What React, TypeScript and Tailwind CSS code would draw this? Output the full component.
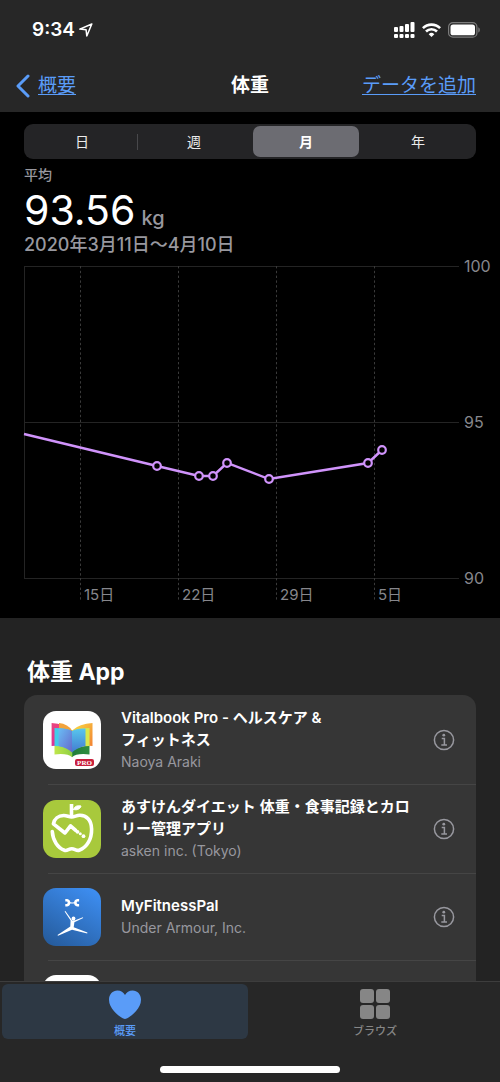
import { useState, type ReactNode } from "react";

const ranges = ["日", "週", "月", "年"];

const points = [
  [133, 206],
  [175, 216],
  [189, 216],
  [203, 203],
  [245, 219],
  [344, 203],
  [358, 190],
];

const days = [
  { x: 56, label: "15日" },
  { x: 154, label: "22日" },
  { x: 252, label: "29日" },
  { x: 350, label: "5日" },
];

const levels = [
  { y: 6, label: "100" },
  { y: 162, label: "95" },
  { y: 318, label: "90" },
];

function StatusBar() {
  return (
    <div className="flex h-15 items-center justify-between pr-5 pl-8">
      <div className="flex items-center gap-1">
        <span className="text-[19px] font-semibold">9:34</span>
        <svg width="14" height="14" viewBox="0 0 14 14" fill="none" stroke="white" strokeWidth="1.5" strokeLinejoin="round" aria-hidden="true">
          <path d="M12.8 1 .8 6.100l6.300.7.7 6.200z" />
        </svg>
      </div>
      <div className="flex items-center gap-[7px]">
        <svg width="21" height="16" viewBox="0 0 21 16" fill="white" aria-hidden="true">
          <rect x="0" y="5" width="4" height="5" rx="1" />
          <rect x="5.5" y="4" width="4" height="6" rx="1" />
          <rect x="11" y="2" width="4" height="8" rx="1" />
          <rect x="16.5" y="0" width="4" height="10" rx="1" />
          <rect x="0" y="12" width="4" height="4" rx="1" />
          <rect x="5.5" y="12" width="4" height="4" rx="1" />
          <rect x="11" y="12" width="4" height="4" rx="1" />
          <rect x="16.5" y="12" width="4" height="4" rx="1" />
        </svg>
        <svg width="19" height="14" viewBox="0 0 19 14" fill="none" stroke="white" strokeWidth="2.6" aria-hidden="true">
          <path d="M.9 5.1a12.3 12.3 0 0 1 17.2 0" />
          <path d="M4 8.5a7.8 7.8 0 0 1 11 0" />
          <path d="M9.5 14 6.7 11.2a4 4 0 0 1 5.6 0z" fill="white" stroke="none" />
        </svg>
        <svg width="32" height="16" viewBox="0 0 32 16" aria-hidden="true">
          <rect x=".6" y=".6" width="28.3" height="14.6" rx="4.3" fill="none" stroke="#7c7c7c" strokeWidth="1.2" />
          <rect x="2.5" y="2.5" width="24.5" height="10.8" rx="2.6" fill="white" />
          <path d="M30.3 5.3c2 .8 2 4.4 0 5.2z" fill="#7c7c7c" />
        </svg>
      </div>
    </div>
  );
}

function WeightChart() {
  return (
    <svg viewBox="0 0 476 346" className="block w-full overflow-visible" role="img" aria-label="体重">
      {levels.map((l) => (
        <g key={l.label}>
          <rect x="0" y={l.y} width="435" height="1" fill="#242424" />
          <text x="440" y={l.y + 6} fontSize="16" fill="#87878c">
            {l.label}
          </text>
        </g>
      ))}
      <rect x="0" y="6" width="1" height="313" fill="#242424" />
      {days.map((d) => (
        <g key={d.label}>
          <line x1={d.x + 0.5} x2={d.x + 0.5} y1="6" y2="342" stroke="#3a3a3a" strokeDasharray="2.4 2.4" />
          <text x={d.x + 4} y="340" fontSize="15" fill="#87878c">
            {d.label}
          </text>
        </g>
      ))}
      <polyline points={"0,174 " + points.map((p) => p.join(",")).join(" ")} fill="none" stroke="#d093fb" strokeWidth="2.4" />
      {points.map(([x, y]) => (
        <circle key={x} cx={x} cy={y} r="3.8" fill="black" stroke="#d093fb" strokeWidth="2.2" />
      ))}
    </svg>
  );
}

function VitalbookIcon() {
  return (
    <svg viewBox="0 0 58 58" className="size-full" aria-hidden="true">
      <defs>
        <linearGradient id="vb-pink" x2="0" y2="1">
          <stop stopColor="#e9447e" />
          <stop offset="1" stopColor="#d72f9b" />
        </linearGradient>
        <linearGradient id="vb-orange" x1="0" y1="0" x2="1" y2="1">
          <stop stopColor="#f9df43" />
          <stop offset="1" stopColor="#f27a32" />
        </linearGradient>
        <linearGradient id="vb-left" x1="0" y1="0" x2="1" y2="1">
          <stop stopColor="#69bdf5" />
          <stop offset="1" stopColor="#6668ca" />
        </linearGradient>
        <linearGradient id="vb-right" x2="0" y2="1">
          <stop stopColor="#58c7ee" />
          <stop offset="1" stopColor="#437bd0" />
        </linearGradient>
        <linearGradient id="vb-green">
          <stop stopColor="#bfe64b" />
          <stop offset=".5" stopColor="#8fd043" />
          <stop offset=".52" stopColor="#217d3a" />
          <stop offset="1" stopColor="#2f8e3f" />
        </linearGradient>
      </defs>
      <rect width="58" height="58" fill="white" />
      <path d="M11.5 34h35v9.5q-13-1.5-17.5 2.7-4.5-4.2-17.5-2.7z" fill="url(#vb-green)" />
      <path d="M8.600 12q13 .5 20.400 7.500v20Q20 34 8.600 35z" fill="url(#vb-pink)" />
      <path d="M16 12q9 1 13 7.500v3l-13-5z" fill="#f2a33c" />
      <path d="M49.500 12q-13 .5-20.500 7.500v20q9-5.500 20.500-4.500z" fill="url(#vb-orange)" />
      <path d="M46.500 17q-12 0-17.500 3v20q7-5 17.500-5z" fill="#d7e84d" />
      <path d="M11.500 17q12 0 17.500 3v20q-7-5-17.500-5z" fill="#42cce9" />
      <path d="M15.500 17.500q9-.5 13.500 2.500v21.500q-5-5-13.500-6.500z" fill="url(#vb-left)" />
      <path d="M42.500 17.500q-9-.5-13.500 2.500v21.500q5-5 13.500-6.500z" fill="url(#vb-right)" />
      <rect x="32" y="48" width="19" height="7" rx="2" fill="#c9203c" />
      <text x="41.5" y="54" fontSize="7" fontWeight="700" textAnchor="middle" fill="white" fontFamily="Liberation Serif, serif">
        PRO
      </text>
    </svg>
  );
}

function AskenIcon() {
  return (
    <svg viewBox="0 0 58 58" className="size-full" fill="none" stroke="white" strokeLinejoin="round" strokeLinecap="round" aria-hidden="true">
      <rect width="58" height="58" fill="#a8c93c" stroke="none" />
      <path d="M28.5 15.5V4" strokeWidth="3.6" strokeLinecap="butt" />
      <path d="M30.5 9.5c1-3.500 4-4.300 7.500-3.500-.8 3.200-3.800 4.500-7.500 3.500z" fill="white" stroke="white" />
      <path d="M9.300 31.500c.4 8.500 5.300 16.500 12.200 18.800 2.700.8 4.300-1.500 7.300-1.500s4.400 2.300 7.400 1.400c8-2.700 12.600-11.500 12.400-21.200-.2-8.700-5-13.900-12-13.700-3.200.1-5 1.600-8 1.600s-4.500-1.500-8-1.400c-5.200.2-9.300 3.500-10.200 8.300L22 33l5.500-7.200 5.200 4.500" strokeWidth="3.6" />
      <g fill="white" stroke="none">
        <circle cx="34.5" cy="31.8" r="1.9" />
        <circle cx="37.3" cy="33.8" r="1.5" />
        <circle cx="40.5" cy="36.2" r="1.9" />
      </g>
    </svg>
  );
}

function FitnessIcon() {
  return (
    <svg viewBox="0 0 58 58" className="size-full" aria-hidden="true">
      <defs>
        <linearGradient id="mfp" x1=".8" y1="0" x2=".2" y2="1">
          <stop stopColor="#3d8df0" />
          <stop offset="1" stopColor="#265d9f" />
        </linearGradient>
      </defs>
      <rect width="58" height="58" fill="url(#mfp)" />
      <g fill="none" stroke="white" strokeWidth="2.600">
        <path d="M22.300 12.300h1.700q2 .3 2 2.500t-2 2.500h-1.700" />
        <path d="M36.100 12.300h-1.700q-2 .3-2 2.500t2 2.500h1.700" />
        <path d="M25.600 14.400q3.600 1.200 7.200 0" strokeWidth="1.200" />
      </g>
      <g fill="white">
        <circle cx="30.5" cy="30.5" r="1.9" />
        <path d="m21.6 23.4.8-.3 6.800 9.500 3-.4 7.700-2.900.3.8-8.800 4.100-.7 5 13.700 5.300-.2 1-15.200-3.800-14 6.100-.5-.9 12.800-8.400.3-6.100z" />
      </g>
    </svg>
  );
}

function InfoButton({ name }: { name: string }) {
  return (
    <button type="button" aria-label={`${name} 情報`} className="mr-[21px] shrink-0">
      <svg width="22" height="22" viewBox="0 0 22 22" fill="none" stroke="#98989f" aria-hidden="true">
        <circle cx="11" cy="11" r="9.6" strokeWidth="1.5" />
        <circle cx="10.8" cy="6.2" r="1.4" fill="#98989f" stroke="none" />
        <path d="M8.7 9.6h2.700v6.200M8.300 15.900H14" strokeWidth="1.5" />
      </svg>
    </button>
  );
}

function AppRow({ icon, title, maker, first }: { icon: ReactNode; title: string; maker: string; first?: boolean }) {
  return (
    <li className="flex items-stretch pl-[19px]">
      <div className="flex shrink-0 items-center">
        <div className="size-[58px] overflow-hidden rounded-[13px]">{icon}</div>
      </div>
      <div className="relative flex min-h-[87px] flex-1 items-center gap-4 pl-5">
        {!first && <div className="absolute top-0 right-0 -left-[53px] h-px bg-[#454545]" />}
        <div className="min-w-0 flex-1 py-3">
          <h3 className="text-[15px] leading-[22px] font-semibold whitespace-pre-line text-white">{title}</h3>
          <p className="text-sm leading-[21px] text-[#98989f]">{maker}</p>
        </div>
        <InfoButton name={title} />
      </div>
    </li>
  );
}

export default function App() {
  const [range, setRange] = useState("月");
  return (
    <div lang="ja" className="flex h-screen flex-col bg-[#272727] font-['Inter','Noto_Sans_CJK_JP',sans-serif] text-white">
      <header className="shrink-0">
        <StatusBar />
        <nav className="grid h-13 grid-cols-[1fr_auto_1fr] items-center px-4 text-[19px]">
          <a href="#summary" className="flex items-center gap-2 text-[#5a9cf8]">
            <svg width="14" height="24" viewBox="0 0 14 24" fill="none" stroke="currentColor" strokeWidth="3" strokeLinecap="round" strokeLinejoin="round" aria-hidden="true">
              <path d="M12 2 2 12l10 10" />
            </svg>
            <span className="underline underline-offset-2">概要</span>
          </a>
          <h1 className="font-bold">体重</h1>
          <a href="#add" className="justify-self-end pr-2 text-[#5a9cf8] underline underline-offset-2">
            データを追加
          </a>
        </nav>
      </header>

      <main className="min-h-0 flex-1 overflow-y-auto bg-[#232323] [scrollbar-width:none]">
        <section className="bg-black pt-3 pb-3 pl-6">
          <div className="mr-6 grid h-[35px] grid-cols-4 rounded-[9px] bg-[#242426] p-[2px]">
            {ranges.map((r, i) => (
              <div key={r} className="relative px-[3px]">
                <button
                  type="button"
                  aria-pressed={r === range}
                  onClick={() => setRange(r)}
                  className={`h-full w-full rounded-[7px] text-sm ${r === range ? "bg-[#6c6c72] font-bold text-white" : "text-[#ececec]"}`}
                >
                  {r}
                </button>
                {i === 0 && <div className="absolute top-2 right-0 h-4 w-px bg-[#48484b]" />}
              </div>
            ))}
          </div>
          <p className="mt-1 text-sm leading-6 font-medium text-[#98989f]">平均</p>
          <p className="flex items-baseline gap-[6px] leading-[46px]">
            <span className="text-[41px]">93.56</span>
            <span className="text-xl font-medium text-[#98989f]">kg</span>
          </p>
          <p className="mb-[3px] text-[18px] leading-6 font-medium text-[#98989f]">2020年3月11日〜4月10日</p>
          <WeightChart />
        </section>

        <section className="px-6 pt-[37px]">
          <h2 className="pb-[6px] pl-[3px] text-[23px] leading-[34px] font-bold">体重 App</h2>
          <ul className="rounded-t-[13px] bg-[#363636]">
            <AppRow first icon={<VitalbookIcon />} title={"Vitalbook Pro - ヘルスケア &\nフィットネス"} maker="Naoya Araki" />
            <AppRow icon={<AskenIcon />} title="あすけんダイエット 体重・食事記録とカロリー管理アプリ" maker="asken inc. (Tokyo)" />
            <AppRow icon={<FitnessIcon />} title="MyFitnessPal" maker="Under Armour, Inc." />
            <AppRow icon={<div className="size-full bg-white" />} title="" maker="" />
          </ul>
        </section>
      </main>

      <footer className="shrink-0 border-t border-[#3d3d3d] text-[11px] font-medium">
        <nav className="grid grid-cols-2 gap-1 p-[2px]">
          <a href="#summary" aria-current="page" className="flex h-[55px] flex-col items-center justify-end rounded-md bg-[#2d3844] text-[#5a9cf8]">
            <svg width="32" height="29" viewBox="0 0 32 29" fill="currentColor" aria-hidden="true">
              <path d="M16 29C13.5 29 0 20.5 0 9.8 0 4.3 3.7.5 8.4.5c3.500 0 6.200 1.800 7.600 4.600C17.400 2.300 20.100.5 23.600.5 28.300.5 32 4.300 32 9.800 32 20.500 18.500 29 16 29z" />
            </svg>
            <span className="mt-1 leading-4">概要</span>
          </a>
          <a href="#browse" className="flex h-[55px] flex-col items-center justify-end text-[#868686]">
            <svg width="30" height="30" viewBox="0 0 30 30" fill="currentColor" aria-hidden="true">
              <rect width="14" height="14" rx="3" />
              <rect x="16" width="14" height="14" rx="3" />
              <rect y="16" width="14" height="14" rx="3" />
              <rect x="16" y="16" width="14" height="14" rx="3" />
            </svg>
            <span className="mt-1 leading-4">ブラウズ</span>
          </a>
        </nav>
        <div className="mx-auto mt-[25px] mb-[9px] h-[7px] w-9/25 rounded-full bg-white" />
      </footer>
    </div>
  );
}
